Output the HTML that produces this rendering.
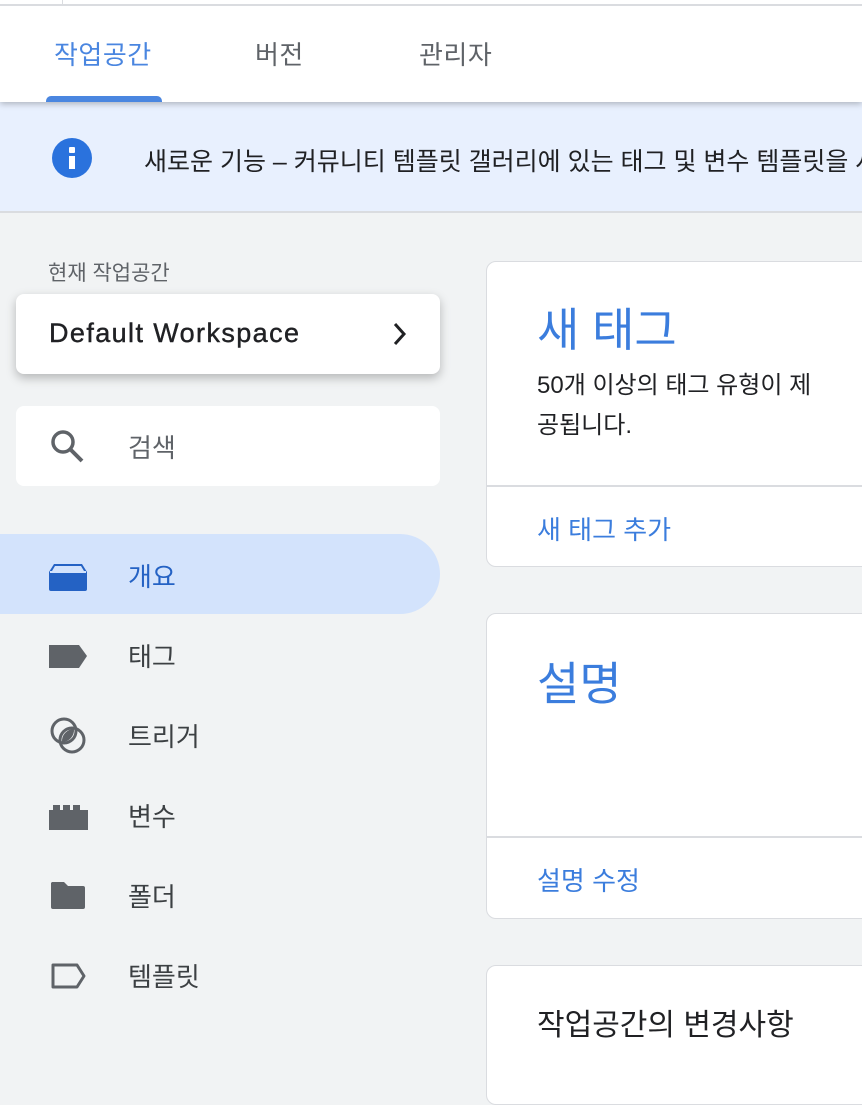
<!DOCTYPE html>
<html><head><meta charset="utf-8"><style>
*{margin:0;padding:0;box-sizing:border-box}
body{width:862px;height:1064px;overflow:hidden;background:#f1f3f4;font-family:"Liberation Sans","Noto Sans CJK KR",sans-serif;position:relative}
.abs{position:absolute}
.top{left:0;top:0;width:862px;height:102px;background:#fff;box-shadow:0 2px 6px rgba(0,0,0,.25);z-index:2}
.tab{position:absolute;top:35px;font-size:26px;color:#5f6368;letter-spacing:0.5px}
.banner{left:0;top:102px;width:862px;height:111px;background:#e8f0fe;border-bottom:2px solid #dadce0}
.card{background:#fff;border:1px solid #dadce0;border-radius:10px}
.nav{position:absolute;left:128px;font-size:26px;color:#3c4043}
</style></head><body>
<div class="abs" style="left:0;top:4px;width:862px;height:2px;background:#dadce0;z-index:3"></div>
<div class="abs" style="left:62px;top:0;width:1px;height:5px;background:#dadce0;z-index:3"></div>
<div class="abs top">
<div class="tab" style="left:54px;color:#4a86e0">작업공간</div>
<div class="tab" style="left:255px">버전</div>
<div class="tab" style="left:419px">관리자</div>
<div class="abs" style="left:46px;top:96px;width:116px;height:6px;background:#4a86e0;border-radius:5px 5px 0 0"></div>
</div>
<div class="abs banner">
<div class="abs" style="left:52px;top:36px;width:40px;height:40px;border-radius:50%;background:#2a72dd"><div class="abs" style="left:17px;top:9px;width:6px;height:6px;background:#fff;border-radius:1px"></div><div class="abs" style="left:17px;top:18px;width:6px;height:13px;background:#fff"></div></div>
<div class="abs" style="left:144px;top:40px;font-size:25px;color:#202124;white-space:nowrap">새로운 기능 – 커뮤니티 템플릿 갤러리에 있는 태그 및 변수 템플릿을 사</div>
</div>
<div class="abs" style="left:48px;top:257px;font-size:21px;color:#5f6368">현재 작업공간</div>
<div class="abs" style="left:16px;top:294px;width:424px;height:80px;background:#fff;border-radius:8px;box-shadow:0 4px 10px rgba(0,0,0,.25)">
<div class="abs" style="left:33px;top:24px;font-size:27px;color:#202124;letter-spacing:1.4px;-webkit-text-stroke:0.4px #202124">Default Workspace</div>
<svg class="abs" style="left:374px;top:26px" width="20" height="28" viewBox="0 0 20 28"><path d="M5 4l9 10-9 10" fill="none" stroke="#202124" stroke-width="3"/></svg>
</div>
<div class="abs" style="left:16px;top:406px;width:424px;height:80px;background:#fff;border-radius:8px">
<svg class="abs" style="left:30px;top:20px" width="40" height="40" viewBox="0 0 40 40"><circle cx="17" cy="16" r="10" fill="none" stroke="#5f6368" stroke-width="3.5"/><path d="M24 23l12 12" stroke="#5f6368" stroke-width="4"/></svg>
<div class="abs" style="left:112px;top:22px;font-size:26px;color:#5f6368">검색</div>
</div>
<div class="abs" style="left:0;top:534px;width:440px;height:80px;background:#d3e3fc;border-radius:0 40px 40px 0"></div>
<svg class="abs" style="left:48px;top:562px" width="40" height="30"><path d="M6 2h28l5 8v17a2 2 0 0 1-2 2H3a2 2 0 0 1-2-2V10z" fill="#2462c4"/><path d="M2 10h36" stroke="#d3e3fc" stroke-width="2"/><path d="M7 4h26l3 5H4z" fill="#d3e3fc"/></svg>
<div class="nav" style="top:557px;color:#2462c4">개요</div>
<svg class="abs" style="left:48px;top:644px" width="40" height="26"><path d="M1 1h30l8 11-8 12H1z" fill="#5f6368"/></svg>
<div class="nav" style="top:637px">태그</div>
<svg class="abs" style="left:48px;top:716px" width="40" height="40"><circle cx="16" cy="15" r="12" fill="none" stroke="#5f6368" stroke-width="3"/><circle cx="24" cy="24" r="12" fill="none" stroke="#5f6368" stroke-width="3"/><path d="M26 13a12 12 0 0 1-12 13 12 12 0 0 1 12-13z" fill="#5f6368"/></svg>
<div class="nav" style="top:717px">트리거</div>
<svg class="abs" style="left:48px;top:804px" width="40" height="26"><path d="M1 6h4V1h7v5h3V1h7v5h3V1h7v5h9v20H1z" fill="#5f6368"/></svg>
<div class="nav" style="top:797px">변수</div>
<svg class="abs" style="left:50px;top:880px" width="36" height="30"><path d="M2 2h12l4 4h15a2 2 0 0 1 2 2v19a2 2 0 0 1-2 2H3a2 2 0 0 1-2-2V3z" fill="#5f6368"/></svg>
<div class="nav" style="top:877px">폴더</div>
<svg class="abs" style="left:50px;top:962px" width="36" height="28"><path d="M3 3h24l7 11-7 11H3z" fill="none" stroke="#5f6368" stroke-width="3" stroke-linejoin="round"/></svg>
<div class="nav" style="top:957px">템플릿</div>

<div class="abs card" style="left:486px;top:261px;width:400px;height:306px">
<div class="abs" style="left:50px;top:32px;font-size:46px;color:#3b7ddd">새 태그</div>
<div class="abs" style="left:50px;top:104px;font-size:24px;line-height:40px;color:#202124;width:330px">50개 이상의 태그 유형이 제<br>공됩니다.</div>
<div class="abs" style="left:0;top:223px;width:400px;height:2px;background:#dadce0"></div>
<div class="abs" style="left:50px;top:248px;font-size:26px;color:#3b7ddd">새 태그 추가</div>
</div>
<div class="abs card" style="left:486px;top:613px;width:400px;height:306px">
<div class="abs" style="left:50px;top:34px;font-size:46px;color:#3b7ddd">설명</div>
<div class="abs" style="left:0;top:222px;width:400px;height:2px;background:#dadce0"></div>
<div class="abs" style="left:50px;top:247px;font-size:26px;color:#3b7ddd">설명 수정</div>
</div>
<div class="abs card" style="left:486px;top:965px;width:400px;height:140px">
<div class="abs" style="left:50px;top:34px;font-size:30px;color:#202124">작업공간의 변경사항</div>
</div>
</body></html>
